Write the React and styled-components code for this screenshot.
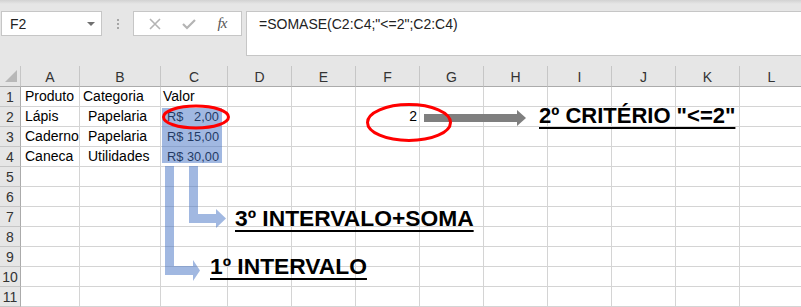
import React from 'react';
import styled, { createGlobalStyle } from 'styled-components';

const GlobalStyle = createGlobalStyle`
  html, body { margin: 0; padding: 0; background: #fff; }
  body { font-family: 'Liberation Sans', Arial, sans-serif; }
`;

const Page = styled.div`
  position: relative;
  width: 801px;
  height: 307px;
  overflow: hidden;
  background: #fff;
`;

const Toolbar = styled.div`
  height: 66px;
  box-sizing: border-box;
  padding: 11px 0 0 1px;
  display: flex;
  align-items: flex-start;
  background: linear-gradient(#d2d2d2 0px, #e6e6e6 4px, #e6e6e6 100%);
`;

const NameBox = styled.div`
  width: 101px;
  height: 25px;
  box-sizing: border-box;
  border: 1px solid #c6c6c6;
  background: #fff;
  display: flex;
  align-items: center;
  justify-content: space-between;
  padding: 0 6px 0 8px;
  font-size: 14px;
  color: #222;
`;

const Caret = styled.span`
  width: 0;
  height: 0;
  border-left: 4px solid transparent;
  border-right: 4px solid transparent;
  border-top: 4px solid #707070;
`;

const Grip = styled.div`
  width: 31px;
  height: 25px;
  display: flex;
  flex-direction: column;
  align-items: center;
  justify-content: center;
  gap: 2px;

  span {
    width: 2px;
    height: 2px;
    background: #a6a6a6;
  }
`;

const ButtonBox = styled.div`
  width: 109px;
  height: 25px;
  box-sizing: border-box;
  border: 1px solid #c6c6c6;
  background: #fff;
  display: flex;
  align-items: center;
  justify-content: space-around;
  padding: 0 4px;
`;

const Fx = styled.span`
  font-family: 'Liberation Serif', 'Times New Roman', serif;
  font-style: italic;
  font-size: 15px;
  color: #555;
  letter-spacing: -1px;
`;

const FormulaBox = styled.div`
  flex: 1;
  margin-left: 4px;
  height: 45px;
  box-sizing: border-box;
  border: 1px solid #c6c6c6;
  border-right: none;
  background: #fff;
  padding: 3px 0 0 12px;
  font-size: 14px;
  line-height: 18px;
  color: #222;
`;

const Sheet = styled.div`
  display: grid;
  grid-template-columns: 21px 59px 81px 67px repeat(9, 64px);
  grid-template-rows: 21px repeat(11, 20px);
`;

const Corner = styled.div`
  background: #e6e6e6;
  border-right: 1px solid #c6c6c6;
  border-bottom: 1px solid #ababab;
  box-sizing: border-box;
  position: relative;

  &::after {
    content: '';
    position: absolute;
    right: 3px;
    bottom: 4px;
    width: 0;
    height: 0;
    border-left: 12px solid transparent;
    border-bottom: 12px solid #b8b8b8;
  }
`;

const ColHead = styled.div`
  background: #e6e6e6;
  box-sizing: border-box;
  border-bottom: 1px solid #ababab;
  border-right: 1px solid #c6c6c6;
  display: flex;
  align-items: center;
  justify-content: center;
  font-size: 14px;
  color: #333;
  padding-top: 2px;
`;

const RowHead = styled.div`
  background: #e6e6e6;
  box-sizing: border-box;
  border-right: 1px solid #ababab;
  border-bottom: 1px solid #c6c6c6;
  display: flex;
  align-items: center;
  justify-content: center;
  font-size: 14px;
  color: #333;
  line-height: 20px;
`;

const Cell = styled.div`
  box-sizing: border-box;
  border-right: 1px solid #d4d4d4;
  border-bottom: 1px solid #d4d4d4;
  font-size: 14px;
  line-height: 19px;
  color: #000;
  white-space: nowrap;
  padding: 0 ${(p) => (p.$right ? '2px' : '0')} 0 ${(p) => p.$indent || 4}px;
  text-align: ${(p) => (p.$right ? 'right' : 'left')};
`;

const MoneyCell = styled(Cell)`
  display: flex;
  justify-content: space-between;
  padding: 0 8px 0 6px;
  font-size: 12.8px;
`;

const Highlight = styled.div`
  position: absolute;
  left: 162px;
  top: 108px;
  width: 60px;
  height: 55px;
  background: rgba(68, 114, 196, 0.5);
`;

const Label = styled.div`
  position: absolute;
  left: ${(p) => p.$x}px;
  top: ${(p) => p.$y}px;
  font-family: 'Liberation Sans', Arial, sans-serif;
  font-weight: bold;
  font-size: ${(p) => p.$size || 22}px;
  line-height: 22px;
  color: #000;
  white-space: nowrap;
  text-decoration: underline;
  text-decoration-thickness: 2px;
  text-underline-offset: 4px;
`;

const Overlay = styled.svg`
  position: absolute;
  left: 0;
  top: 0;
  pointer-events: none;
`;

const columns = ['A', 'B', 'C', 'D', 'E', 'F', 'G', 'H', 'I', 'J', 'K', 'L'];

const data = {
  1: { A: { t: 'Produto' }, B: { t: 'Categoria', indent: 3 }, C: { t: 'Valor', indent: 2 } },
  2: {
    A: { t: 'Lápis' },
    B: { t: 'Papelaria', indent: 8 },
    C: { money: ['R$', '2,00'] },
    F: { t: '2', right: true },
  },
  3: { A: { t: 'Caderno' }, B: { t: 'Papelaria', indent: 8 }, C: { money: ['R$', '15,00'] } },
  4: { A: { t: 'Caneca' }, B: { t: 'Utilidades', indent: 8 }, C: { money: ['R$', '30,00'] } },
};

const blue = 'rgba(68, 114, 196, 0.5)';

const App = () => {
  const rows = Array.from({ length: 11 }, (_, i) => i + 1);
  return (
    <Page>
      <GlobalStyle />
      <Toolbar>
        <NameBox>
          F2
          <Caret />
        </NameBox>
        <Grip>
          <span />
          <span />
          <span />
        </Grip>
        <ButtonBox>
          <svg width="12" height="12" viewBox="0 0 12 12">
            <path d="M1 1 L11 11 M11 1 L1 11" stroke="#b4b4b4" strokeWidth="1.6" fill="none" />
          </svg>
          <svg width="14" height="12" viewBox="0 0 14 12">
            <path d="M1 6 L5 10 L13 2" stroke="#b4b4b4" strokeWidth="2.2" fill="none" />
          </svg>
          <Fx>fx</Fx>
        </ButtonBox>
        <FormulaBox>=SOMASE(C2:C4;"&lt;=2";C2:C4)</FormulaBox>
      </Toolbar>
      <Sheet>
        <Corner />
        {columns.map((c) => (
          <ColHead key={c}>{c}</ColHead>
        ))}
        {rows.map((r) => (
          <React.Fragment key={r}>
            <RowHead>{r}</RowHead>
            {columns.map((c) => {
              const cell = (data[r] || {})[c];
              if (!cell) return <Cell key={c} />;
              if (cell.money) {
                return (
                  <MoneyCell key={c}>
                    <span>{cell.money[0]}</span>
                    <span>{cell.money[1]}</span>
                  </MoneyCell>
                );
              }
              return (
                <Cell key={c} $indent={cell.indent} $right={cell.right}>
                  {cell.t}
                </Cell>
              );
            })}
          </React.Fragment>
        ))}
      </Sheet>

      <Highlight />

      <Overlay width="801" height="307" viewBox="0 0 801 307">
        <polygon
          points="424,114 517,114 517,110 526,118 517,126 517,122 424,122"
          fill="#7f7f7f"
        />
        <ellipse cx="196" cy="117" rx="32.5" ry="11" fill="none" stroke="#ff0000" strokeWidth="3" />
        <ellipse cx="409" cy="122.5" rx="41.5" ry="18" fill="none" stroke="#ff0000" strokeWidth="3" />
        <polygon
          points="165,166 174,166 174,266 193,266 193,260 200,270.5 193,281 193,275 165,275"
          fill={blue}
        />
        <polygon
          points="189,166 198,166 198,214 216,214 216,209 226,218.5 216,228 216,223 189,223"
          fill={blue}
        />
      </Overlay>

      <Label $x={539} $y={105}>2º CRITÉRIO "&lt;=2"</Label>
      <Label $x={235} $y={207} $size={22.8}>3º INTERVALO+SOMA</Label>
      <Label $x={210} $y={255} $size={22.8}>1º INTERVALO</Label>
    </Page>
  );
};

export default App;
